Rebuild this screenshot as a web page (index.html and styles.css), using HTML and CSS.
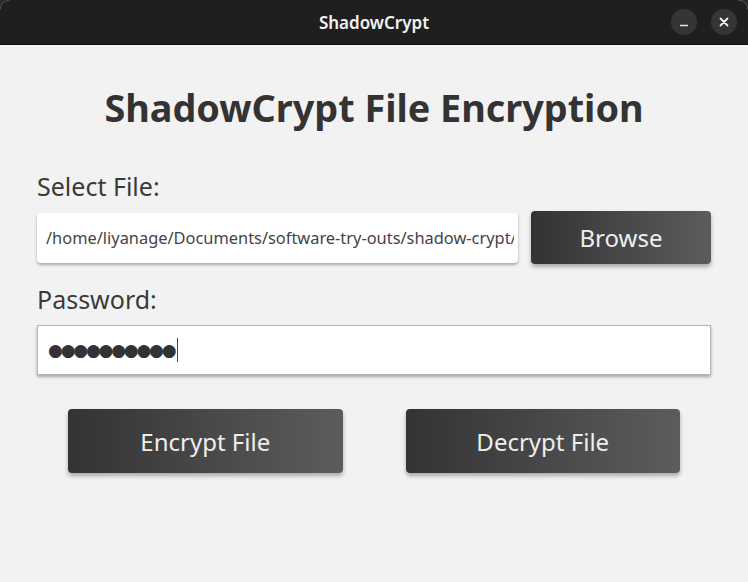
FILE: index.html
```html
<!DOCTYPE html>
<html>
<head>
<meta charset="utf-8">
<link rel="stylesheet" href="styles.css">
</head>
<body>
<div class="window">
  <div class="titlebar">
    <span class="wtitle">ShadowCrypt</span>
    <div class="wbtns">
      <span class="wbtn"><svg width="26" height="26" viewBox="0 0 26 26"><line x1="9" y1="16.5" x2="17" y2="16.5" stroke="#e6e6e6" stroke-width="1.6"/></svg></span>
      <span class="wbtn"><svg width="26" height="26" viewBox="0 0 26 26"><path d="M9.5 9.5 L16.5 16.5 M16.5 9.5 L9.5 16.5" stroke="#f0f0f0" stroke-width="1.8" stroke-linecap="round"/></svg></span>
    </div>
  </div>
  <main class="content">
    <h1 class="heading">ShadowCrypt File Encryption</h1>
    <div class="label label-file">Select File:</div>
    <div class="file-row">
      <div class="field file-field"><span class="path">/home/liyanage/Documents/software-try-outs/shadow-crypt/</span></div>
      <button class="btn browse">Browse</button>
    </div>
    <div class="label label-pw">Password:</div>
    <div class="field pw-field"><span class="dots">●●●●●●●●●●</span><span class="caret"></span></div>
    <div class="actions">
      <button class="btn action">Encrypt File</button>
      <button class="btn action">Decrypt File</button>
    </div>
  </main>
</div>
</body>
</html>
```
FILE: styles.css
```css
html, body {
  margin: 0;
  padding: 0;
  background: #2b2b2b;
}
body {
  width: 748px;
  height: 582px;
  overflow: hidden;
  font-family: "Noto Sans", "Open Sans", sans-serif;
}
.window {
  height: 582px;
  background: #f2f2f2;
  border-radius: 10px 10px 0 0;
  overflow: hidden;
  display: flex;
  flex-direction: column;
}
.titlebar {
  height: 44px;
  flex: none;
  background: #1f1f1f;
  border-bottom: 1px solid #111;
  display: flex;
  align-items: center;
  justify-content: center;
  position: relative;
  box-sizing: content-box;
}
.wtitle {
  color: #f2f2f2;
  font-size: 17px;
  font-weight: 600;
}
.wbtns {
  position: absolute;
  right: 11px;
  top: 9px;
  display: flex;
  gap: 14px;
}
.wbtn {
  width: 26px;
  height: 26px;
  border-radius: 50%;
  background: #353535;
  display: flex;
}
.content {
  padding: 39px 37px 0 37px;
  display: flex;
  flex-direction: column;
  color: #333;
}
.heading {
  margin: 0;
  text-align: center;
  font-size: 37.8px;
  line-height: 48px;
  font-weight: 700;
  color: #333;
}
.label {
  font-size: 25px;
  line-height: 32px;
  color: #3a3a3a;
}
.label-file {
  margin-top: 38px;
}
.file-row {
  margin-top: 9px;
  display: flex;
  align-items: center;
  gap: 13px;
  height: 53px;
}
.field {
  background: #fff;
  box-sizing: border-box;
  display: flex;
  align-items: center;
  overflow: hidden;
  white-space: nowrap;
}
.file-field {
  width: 481px;
  flex: none;
  height: 50px;
  border-radius: 4px;
  padding-left: 9px;
  padding-right: 4px;
  font-size: 16.4px;
  color: #444;
  box-shadow: 0 2px 3px rgba(0,0,0,0.3);
}
.path {
  display: block;
  overflow: hidden;
  width: 100%;
}
.btn {
  border: none;
  border-radius: 4px;
  color: #eee;
  font-family: "Noto Sans", "Open Sans", sans-serif;
  font-size: 24px;
  background: linear-gradient(to right, #333 0%, #5c5c5c 100%);
  box-shadow: 0 3px 4px rgba(0,0,0,0.3);
  padding: 0;
  cursor: pointer;
}
.browse {
  width: 180px;
  height: 53px;
}
.label-pw {
  margin-top: 19px;
}
.pw-field {
  margin-top: 10px;
  height: 50px;
  border: 1px solid #b5b5b5;
  box-shadow: 0 2px 3px rgba(0,0,0,0.3);
  padding-left: 10px;
}
.dots {
  font-family: "DejaVu Sans", sans-serif;
  font-size: 17px;
  color: #333;
  letter-spacing: -2.2px;
}
.caret {
  width: 1px;
  height: 24px;
  margin-left: 3px;
  background: #444;
}
.actions {
  margin-top: 34px;
  padding: 0 31px;
  display: flex;
  gap: 63px;
}
.action {
  flex: 1;
  height: 64px;
}
```
